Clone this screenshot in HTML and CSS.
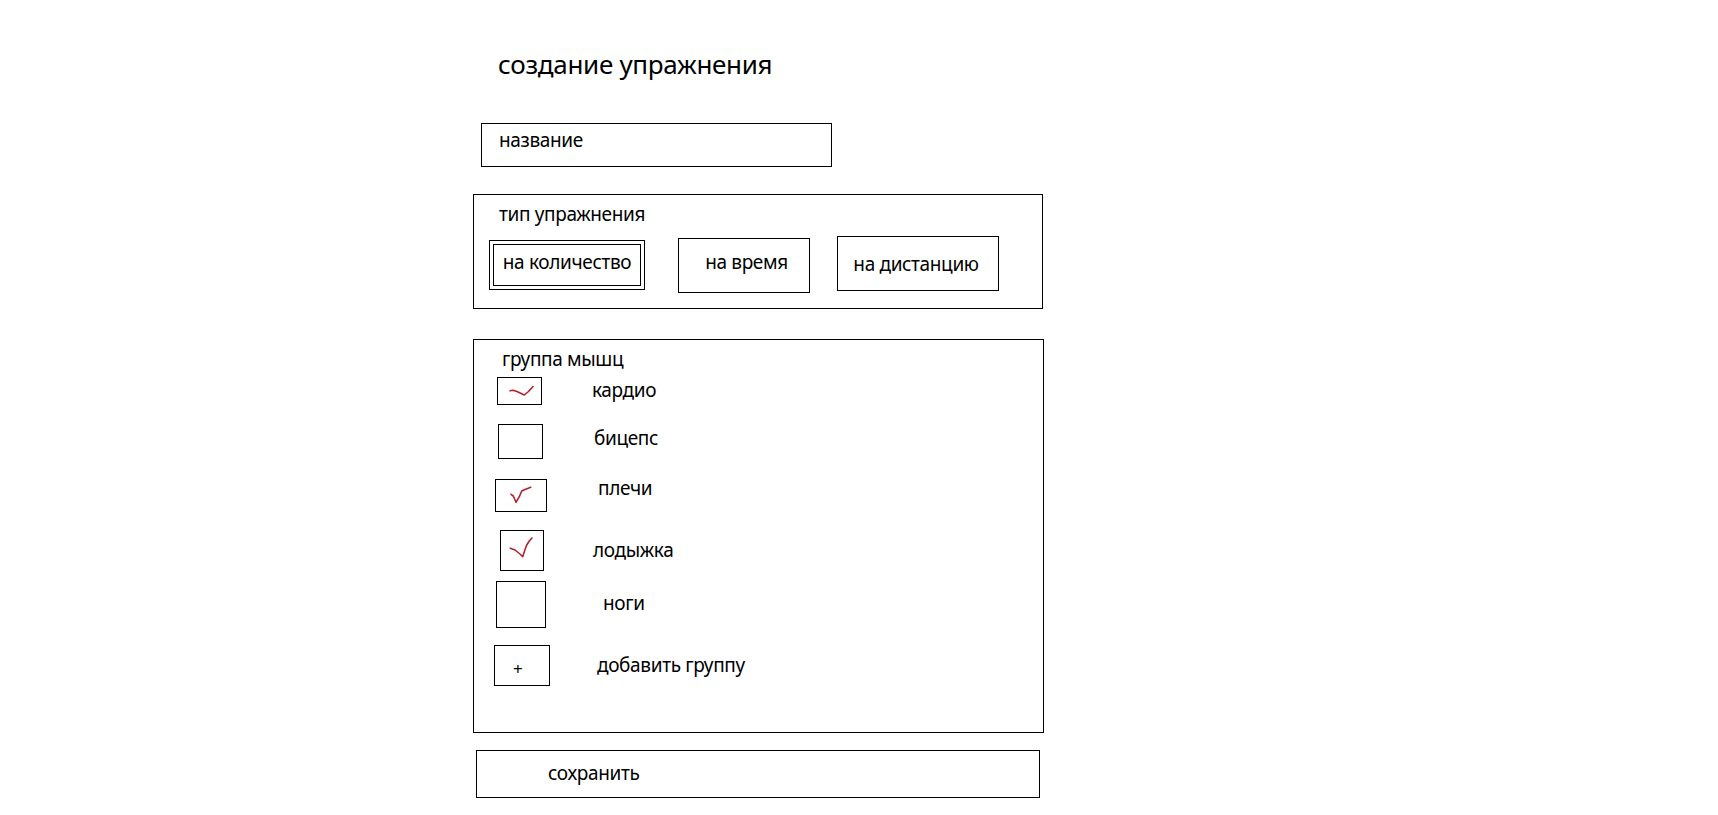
FILE: index.html
```html
<!DOCTYPE html>
<html lang="ru">
<head>
<meta charset="utf-8">
<title>создание упражнения</title>
<link rel="stylesheet" href="styles.css">
</head>
<body>
<main class="form">
  <h1 class="title">создание упражнения</h1>
  <div class="field field--name">название</div>

  <section class="panel panel--type">
    <div class="panel-label panel-label--type">тип упражнения</div>
    <div class="type-options">
      <div class="type-btn type-btn--count is-selected">на количество</div>
      <div class="type-btn type-btn--time">на время</div>
      <div class="type-btn type-btn--dist">на дистанцию</div>
    </div>
  </section>

  <section class="panel panel--groups">
    <div class="panel-label panel-label--groups">группа мышц</div>
    <ul class="group-list">
      <li class="group-item group-item--1">
        <span class="check check--1"><svg class="mark" viewBox="0 0 43 26"><polyline points="12,12.8 15,12.2 19,13.6 26.3,17 30.5,13.5 35,8.5"/></svg></span>
        <span class="group-name group-name--1">кардио</span>
      </li>
      <li class="group-item group-item--2">
        <span class="check check--2"></span>
        <span class="group-name group-name--2">бицепс</span>
      </li>
      <li class="group-item group-item--3">
        <span class="check check--3"><svg class="mark" viewBox="0 0 50 31"><polyline points="15,14.3 17.3,16 20,22.3 23.3,16.7 25.7,11 29.7,9.3 34.7,7.3"/></svg></span>
        <span class="group-name group-name--3">плечи</span>
      </li>
      <li class="group-item group-item--4">
        <span class="check check--4"><svg class="mark" viewBox="0 0 42 39"><polyline points="9.3,17.3 14,19 19,23 21.7,25.7 23.3,20.7 25.7,14 28.3,10 31,7"/></svg></span>
        <span class="group-name group-name--4">лодыжка</span>
      </li>
      <li class="group-item group-item--5">
        <span class="check check--5"></span>
        <span class="group-name group-name--5">ноги</span>
      </li>
      <li class="group-item group-item--6">
        <span class="check check--6 check--add">+</span>
        <span class="group-name group-name--6">добавить группу</span>
      </li>
    </ul>
  </section>

  <div class="save-btn">сохранить</div>
</main>
</body>
</html>
```

FILE: styles.css
```css
html, body {
  margin: 0;
  padding: 0;
  background: #ffffff;
}

body {
  color: #000000;
  font-family: "Noto Sans", "Open Sans", sans-serif;
  font-size: 19px;
  line-height: 24px;
  letter-spacing: -0.35px;
}

.form {
  display: flex;
  flex-direction: column;
  align-items: flex-start;
  padding: 48px 0 0 473px;
}

.title {
  margin: 0 0 0 25px;
  font-size: 26px;
  line-height: 32px;
  font-weight: 400;
  letter-spacing: -0.3px;
}

.field {
  box-sizing: border-box;
  border: 1px solid #000;
}

.field--name {
  margin: 43px 0 0 8px;
  width: 351px;
  height: 44px;
  padding: 4px 0 0 17px;
}

.panel {
  box-sizing: border-box;
  border: 1px solid #000;
}

.panel--type {
  margin-top: 27px;
  width: 570px;
  height: 115px;
}

.panel-label--type {
  margin: 7px 0 0 25px;
}

.type-options {
  display: flex;
  align-items: flex-start;
  margin-top: 10px;
}

.type-btn {
  box-sizing: border-box;
  border: 1px solid #000;
  text-align: center;
  white-space: nowrap;
}

.type-btn--count {
  margin: 8px 0 0 19px;
  width: 148px;
  height: 42px;
  padding-top: 5px;
}

.type-btn.is-selected {
  outline: 1px solid #000;
  outline-offset: 3px;
}

.type-btn--time {
  margin: 2px 0 0 37px;
  width: 132px;
  height: 55px;
  padding: 11px 0 0 5px;
}

.type-btn--dist {
  margin: 0 0 0 27px;
  width: 162px;
  height: 55px;
  padding: 15px 4px 0 0;
}

.panel--groups {
  margin-top: 30px;
  width: 571px;
  height: 394px;
}

.panel-label--groups {
  margin: 7px 0 0 28px;
}

.group-list {
  list-style: none;
  margin: 6px 0 0 0;
  padding: 0;
}

.group-item {
  display: flex;
  align-items: flex-start;
}

.check {
  position: relative;
  box-sizing: border-box;
  border: 1px solid #000;
  flex: none;
  display: block;
}

.mark {
  position: absolute;
  inset: 0;
  width: 100%;
  height: 100%;
  display: block;
}

.mark polyline {
  fill: none;
  stroke: #b3212d;
  stroke-width: 1.6;
  stroke-linejoin: round;
  stroke-linecap: round;
}

.group-name {
  flex: none;
  white-space: nowrap;
}

.group-item--1 { height: 47px; }
.check--1 { margin-left: 23px; width: 45px; height: 28px; }
.group-name--1 { margin: 1px 0 0 50px; }

.group-item--2 { height: 55px; }
.check--2 { margin-left: 24px; width: 45px; height: 35px; }
.group-name--2 { margin: 2px 0 0 51px; }

.group-item--3 { height: 51px; }
.check--3 { margin-left: 21px; width: 52px; height: 33px; }
.group-name--3 { margin: -3px 0 0 51px; }

.group-item--4 { height: 51px; }
.check--4 { margin-left: 26px; width: 44px; height: 41px; }
.group-name--4 { margin: 8px 0 0 49px; }

.group-item--5 { height: 64px; }
.check--5 { margin-left: 22px; width: 50px; height: 47px; }
.group-name--5 { margin: 10px 0 0 57px; }

.check--6 { margin-left: 20px; width: 56px; height: 41px; }
.group-name--6 { margin: 8px 0 0 47px; }

.check--add {
  font-size: 17px;
  line-height: 20px;
  letter-spacing: 0;
  padding: 13px 0 0 18px;
}

.save-btn {
  box-sizing: border-box;
  margin: 17px 0 0 3px;
  width: 564px;
  height: 48px;
  border: 1px solid #000;
  padding: 10px 0 0 71px;
}
```
